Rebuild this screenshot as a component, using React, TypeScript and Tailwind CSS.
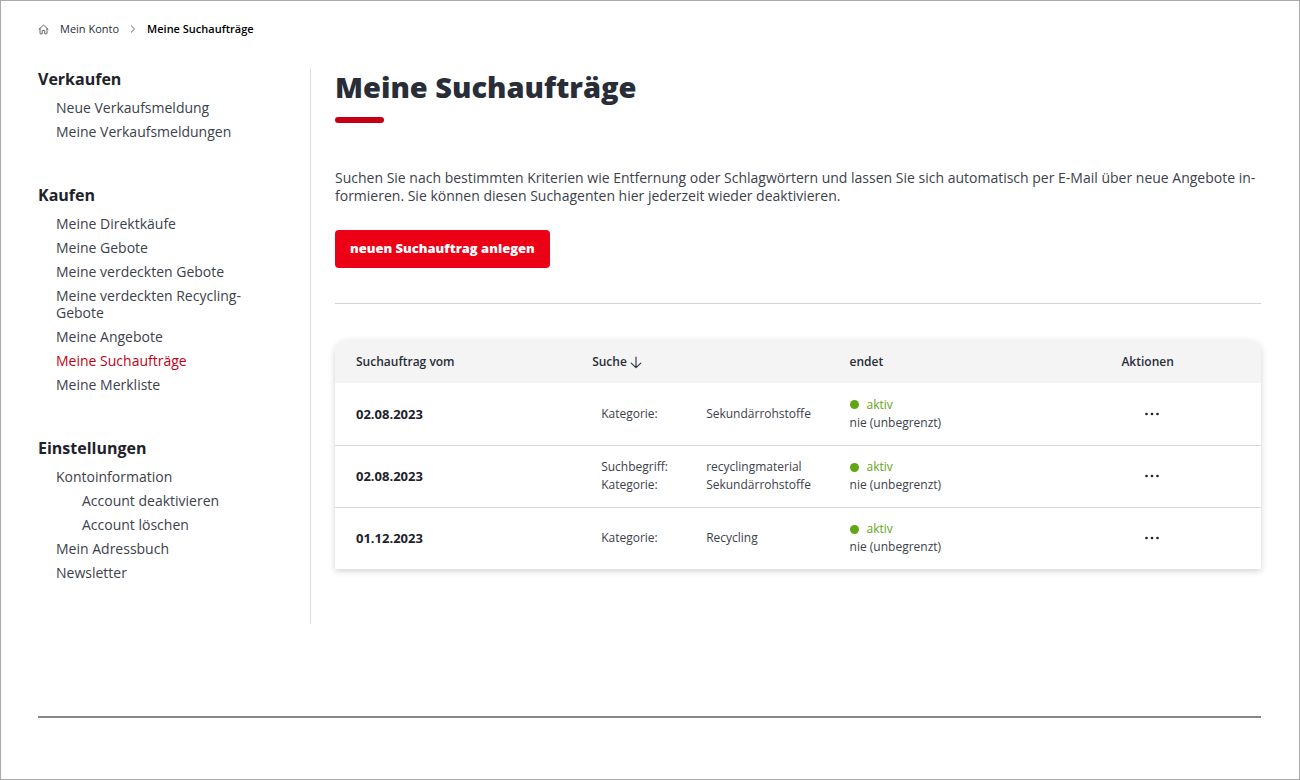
import React from "react";

type NavItem = { label: string; active?: boolean; children?: NavItem[] };
type NavGroup = { title: string; items: NavItem[] };

const navigation: NavGroup[] = [
  {
    title: "Verkaufen",
    items: [{ label: "Neue Verkaufsmeldung" }, { label: "Meine Verkaufsmeldungen" }],
  },
  {
    title: "Kaufen",
    items: [
      { label: "Meine Direktkäufe" },
      { label: "Meine Gebote" },
      { label: "Meine verdeckten Gebote" },
      { label: "Meine verdeckten Recycling-Gebote" },
      { label: "Meine Angebote" },
      { label: "Meine Suchaufträge", active: true },
      { label: "Meine Merkliste" },
    ],
  },
  {
    title: "Einstellungen",
    items: [
      {
        label: "Kontoinformation",
        children: [{ label: "Account deaktivieren" }, { label: "Account löschen" }],
      },
      { label: "Mein Adressbuch" },
      { label: "Newsletter" },
    ],
  },
];

type Order = { date: string; criteria: [string, string][] };

const orders: Order[] = [
  { date: "02.08.2023", criteria: [["Kategorie:", "Sekundärrohstoffe"]] },
  {
    date: "02.08.2023",
    criteria: [
      ["Suchbegriff:", "recyclingmaterial"],
      ["Kategorie:", "Sekundärrohstoffe"],
    ],
  },
  { date: "01.12.2023", criteria: [["Kategorie:", "Recycling"]] },
];

function HomeIcon() {
  return (
    <svg viewBox="0 0 12 12" className="size-[11px]" fill="none" stroke="#40454f" strokeWidth="0.9" strokeLinejoin="round" strokeLinecap="round" aria-hidden="true">
      <path d="M1 5.800 6 1.200l5 4.600M2.200 5v5.300c0 .3.200.5.500.5h1.900V7.600c0-.3.200-.5.500-.5h1.800c.3 0 .5.200.5.500v3.200h1.900c.3 0 .5-.2.500-.5V5" />
    </svg>
  );
}

function ChevronIcon() {
  return (
    <svg viewBox="0 0 6 10" className="h-[10px] w-[6px]" fill="none" stroke="#5a5f68" strokeWidth="0.9" aria-hidden="true">
      <path d="M1 1.500 4.600 5 1 8.500" />
    </svg>
  );
}

function ArrowDownIcon() {
  return (
    <svg viewBox="0 0 12 14" className="h-[14px] w-3" fill="none" stroke="#282d37" strokeWidth="1.100" strokeLinecap="round" strokeLinejoin="round" aria-hidden="true">
      <path d="M6 2v10.500M1.200 8.200 6 12.700 10.800 8.200" />
    </svg>
  );
}

function DotsIcon() {
  return (
    <svg viewBox="0 0 16 4" className="h-1 w-4" fill="#1e222b" aria-hidden="true">
      <circle cx="2.500" cy="2" r="1.350" />
      <circle cx="8" cy="2" r="1.350" />
      <circle cx="13.500" cy="2" r="1.350" />
    </svg>
  );
}

function NavList({ items, nested = false }: { items: NavItem[]; nested?: boolean }) {
  return (
    <ul className={nested ? "mt-[7px] flex flex-col gap-[7px] pl-[26px]" : "mt-[10px] flex flex-col gap-[7px] pl-[18px]"}>
      {items.map((item) => (
        <li key={item.label}>
          <a
            href="#"
            aria-current={item.active ? "page" : undefined}
            className={item.active ? "block text-[#c50014]" : "block text-[#3c414b]"}
          >
            {item.label}
          </a>
          {item.children && <NavList items={item.children} nested />}
        </li>
      ))}
    </ul>
  );
}

export default function App() {
  return (
    <div className="flex min-h-screen flex-col border border-[#aaaaaa] bg-white pt-5 pr-[38px] pl-[37px] font-['Open_Sans',sans-serif] text-[#3c414b]">
      <nav aria-label="Brotkrumen" className="flex h-4 items-center text-[11px] leading-4">
        <a href="#" aria-label="Startseite">
          <HomeIcon />
        </a>
        <a href="#" className="ml-[11px] text-[#282d37]">Mein Konto</a>
        <span className="mx-[11px]">
          <ChevronIcon />
        </span>
        <span aria-current="page" className="font-semibold text-black">Meine Suchaufträge</span>
      </nav>

      <div className="mt-8 flex">
        <nav
          aria-label="Mein Konto"
          className="flex w-[273px] shrink-0 flex-col gap-[45px] border-r border-[#d7dce1] pr-[60px] pb-[43px] text-[14px] leading-[17px]"
        >
          {navigation.map((group) => (
            <section key={group.title}>
              <h2 className="text-[16px] leading-5 font-bold text-[#1e222b]">{group.title}</h2>
              <NavList items={group.items} />
            </section>
          ))}
        </nav>

        <main className="min-w-0 flex-1 pl-6">
          <h1 className="text-[29px] leading-9 font-extrabold text-[#282d37]">Meine Suchaufträge</h1>
          <div className="mt-3 h-[6px] w-[49px] rounded-full bg-[#c50014]" />
          <p className="mt-[46px] text-[14px] leading-[18px]">
            Suchen Sie nach bestimmten Kriterien wie Entfernung oder Schlagwörtern und lassen Sie sich automatisch per E-Mail über neue Angebote in&shy;formieren. Sie können diesen Suchagenten hier jederzeit wieder deaktivieren.
          </p>
          <button type="button" className="mt-[25px] h-[38px] rounded-[4px] bg-[#ec0016] px-[15px] text-[13px] font-extrabold text-white">
            neuen Suchauftrag anlegen
          </button>
          <hr className="mt-[35px] border-[#d0d3d7]" />

          <div className="mt-[36px] overflow-hidden rounded-t-xl shadow-[0_2px_6px_rgba(40,45,55,0.22)]">
            <table className="w-full table-fixed border-collapse text-left text-[12px] leading-[18px]">
              <thead className="bg-[#f4f4f4] text-[#282d37]">
                <tr className="h-[43px]">
                  <th className="w-[25.500%] pl-[21px] font-semibold">Suchauftrag vom</th>
                  <th className="w-[27.800%] pl-[21px] font-semibold">
                    <button type="button" className="flex items-center gap-[3px]">
                      Suche <ArrowDownIcon />
                    </button>
                  </th>
                  <th className="w-[22%] pl-[21px] font-semibold">endet</th>
                  <th className="pl-[2px] text-center font-semibold">Aktionen</th>
                </tr>
              </thead>
              <tbody>
                {orders.map((order, index) => (
                  <tr key={index} className="h-[62px] border-b border-[#d7dce1] last:border-b-0">
                    <td className="pl-[21px] text-[13px] font-bold text-[#1e222b]">{order.date}</td>
                    <td className="pl-[30px]">
                      <dl className="grid grid-cols-[105px_1fr]">
                        {order.criteria.map(([name, value]) => (
                          <React.Fragment key={name}>
                            <dt>{name}</dt>
                            <dd>{value}</dd>
                          </React.Fragment>
                        ))}
                      </dl>
                    </td>
                    <td className="pl-[21px]">
                      <div className="flex items-center gap-2 text-[#63a615]">
                        <span className="size-[9px] rounded-full bg-[#63a615]" />
                        aktiv
                      </div>
                      <div>nie (unbegrenzt)</div>
                    </td>
                    <td className="pl-[10px]">
                      <button type="button" aria-label="Aktionen anzeigen" className="mx-auto flex size-8 items-center justify-center">
                        <DotsIcon />
                      </button>
                    </td>
                  </tr>
                ))}
              </tbody>
            </table>
          </div>
        </main>
      </div>

      <footer className="mt-[92px] border-t-2 border-[#878787]" />
    </div>
  );
}
